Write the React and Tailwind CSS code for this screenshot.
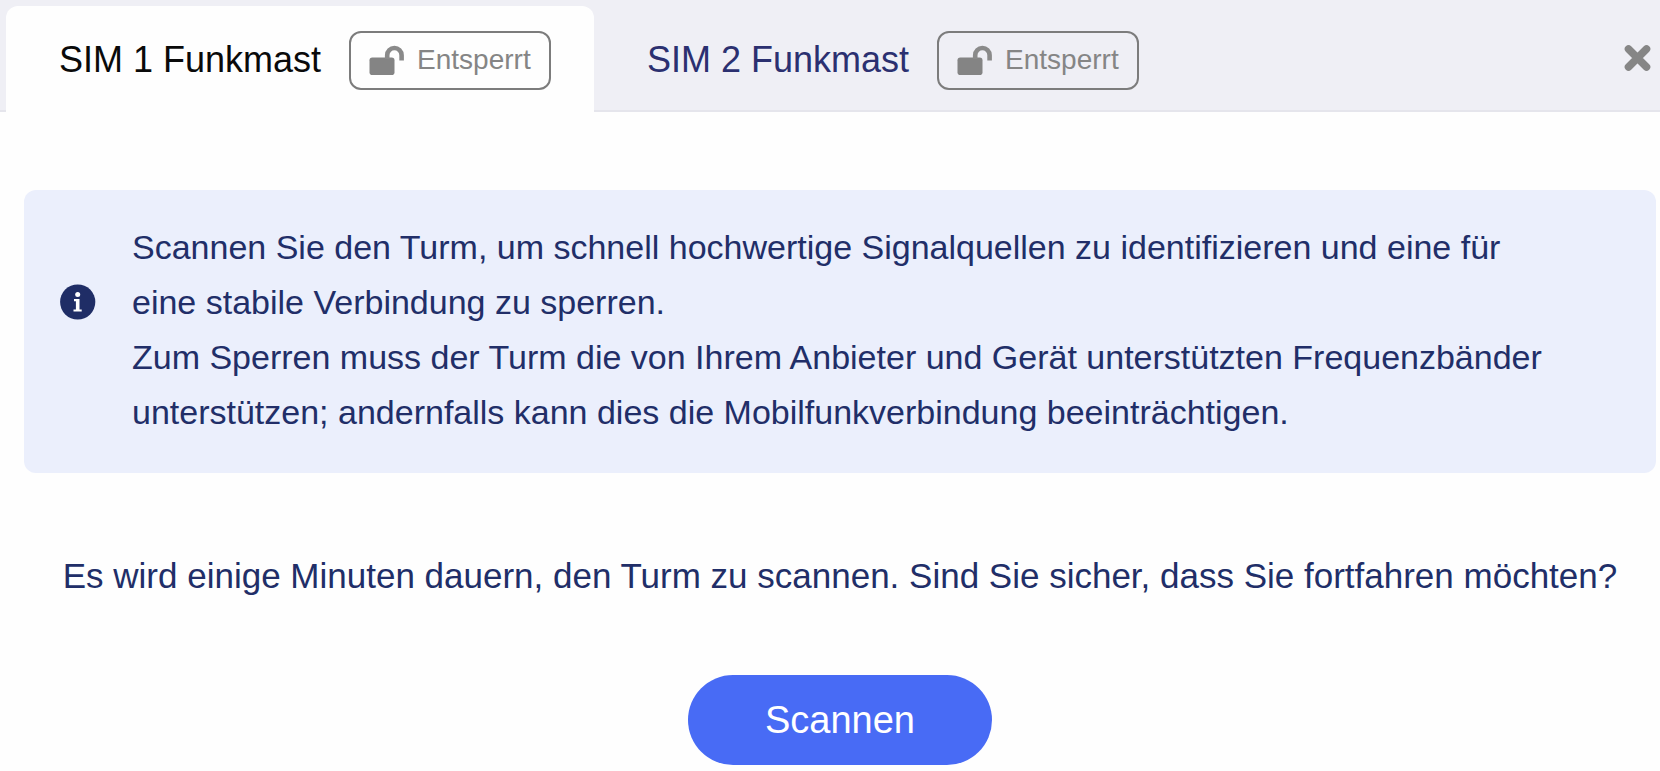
import { useState } from 'react';

const tabs = [
  { id: 'sim1', name: 'SIM 1 Funkmast', status: 'Entsperrt' },
  { id: 'sim2', name: 'SIM 2 Funkmast', status: 'Entsperrt' },
];

function UnlockIcon() {
  return (
    <svg viewBox="0 0 36 30" className="h-[30px] w-9 shrink-0" aria-hidden="true">
      <rect x="0.500" y="12.500" width="25" height="17.500" rx="2.800" fill="#848484" />
      <path
        d="M18.200 14V10.200a7.200 7.200 0 0 1 14.400 0V15.500"
        fill="none"
        stroke="#8a8a8a"
        strokeWidth="4.600"
      />
    </svg>
  );
}

function InfoIcon() {
  return (
    <svg viewBox="0 0 36 36" className="size-9 shrink-0" aria-hidden="true">
      <circle cx="17.700" cy="18" r="17.600" fill="#1f2d66" />
      <circle cx="17.700" cy="10.400" r="2.500" fill="#fff" />
      <path d="M14 15h5.500v10.400h2.200v2.200h-8.200v-2.200h2.400v-8.200H14z" fill="#fff" />
    </svg>
  );
}

function CloseIcon() {
  return (
    <svg viewBox="0 0 28 28" className="size-7" aria-hidden="true">
      <path
        d="M4.500 5l18 18M22.500 5l-18 18"
        fill="none"
        stroke="#868686"
        strokeWidth="7.600"
        strokeLinecap="round"
      />
    </svg>
  );
}

export default function App() {
  const [activeTab, setActiveTab] = useState('sim1');

  return (
    <div className="min-h-screen bg-[#fefefe] font-['Liberation_Sans',Arial,sans-serif] text-[#212e68]">
      {/* Tabs */}
      <header className="flex items-stretch bg-[#efeff5] pt-1.5">
        <div className="w-1.5 border-b-2 border-[#e5e5ec]" />
        <div role="tablist" className="flex">
          {tabs.map((tab) => {
            const isActive = activeTab === tab.id;
            return (
              <button
                key={tab.id}
                type="button"
                role="tab"
                aria-selected={isActive}
                onClick={() => setActiveTab(tab.id)}
                className={`flex h-[106px] w-[588px] items-center gap-7 rounded-t-xl border-b-2 pt-1 pl-[53px] text-4xl whitespace-nowrap ${
                  isActive
                    ? 'border-[#fefefe] bg-[#fefefe] text-[#0a0a0a]'
                    : 'border-[#e5e5ec] text-[#2b3070]'
                }`}
              >
                {tab.name}
                <span className="flex h-[59px] w-[202px] items-center gap-3 rounded-xl border-2 border-[#7c7c7c] pl-[18px] text-[28px] text-[#858585]">
                  <UnlockIcon />
                  {tab.status}
                </span>
              </button>
            );
          })}
        </div>
        <div className="flex grow items-center justify-end border-b-2 border-[#e5e5ec] pr-2">
          <button type="button" aria-label="Schließen">
            <CloseIcon />
          </button>
        </div>
      </header>

      <main className="pt-[78px] pr-1 pb-1 pl-6">
        <section className="flex items-start gap-9 rounded-xl bg-[#ebeffc] pt-[30px] pr-24 pb-[33px] pl-9">
          <div className="flex h-[164px] items-center">
            <InfoIcon />
          </div>
          <div className="text-[34px] leading-[55px]">
            <p>
              Scannen Sie den Turm, um schnell hochwertige Signalquellen zu identifizieren und eine für eine
              stabile Verbindung zu sperren.
            </p>
            <p>
              Zum Sperren muss der Turm die von Ihrem Anbieter und Gerät unterstützten Frequenzbänder
              unterstützen; andernfalls kann dies die Mobilfunkverbindung beeinträchtigen.
            </p>
          </div>
        </section>

        <p className="mt-[75px] text-center text-[35px] leading-[55px]">
          Es wird einige Minuten dauern, den Turm zu scannen. Sind Sie sicher, dass Sie fortfahren möchten?
        </p>

        <div className="mt-[72px] flex justify-center">
          <button type="button" className="h-[90px] w-[304px] rounded-full bg-[#486bf5] text-[38px] text-white">
            Scannen
          </button>
        </div>
      </main>
    </div>
  );
}
